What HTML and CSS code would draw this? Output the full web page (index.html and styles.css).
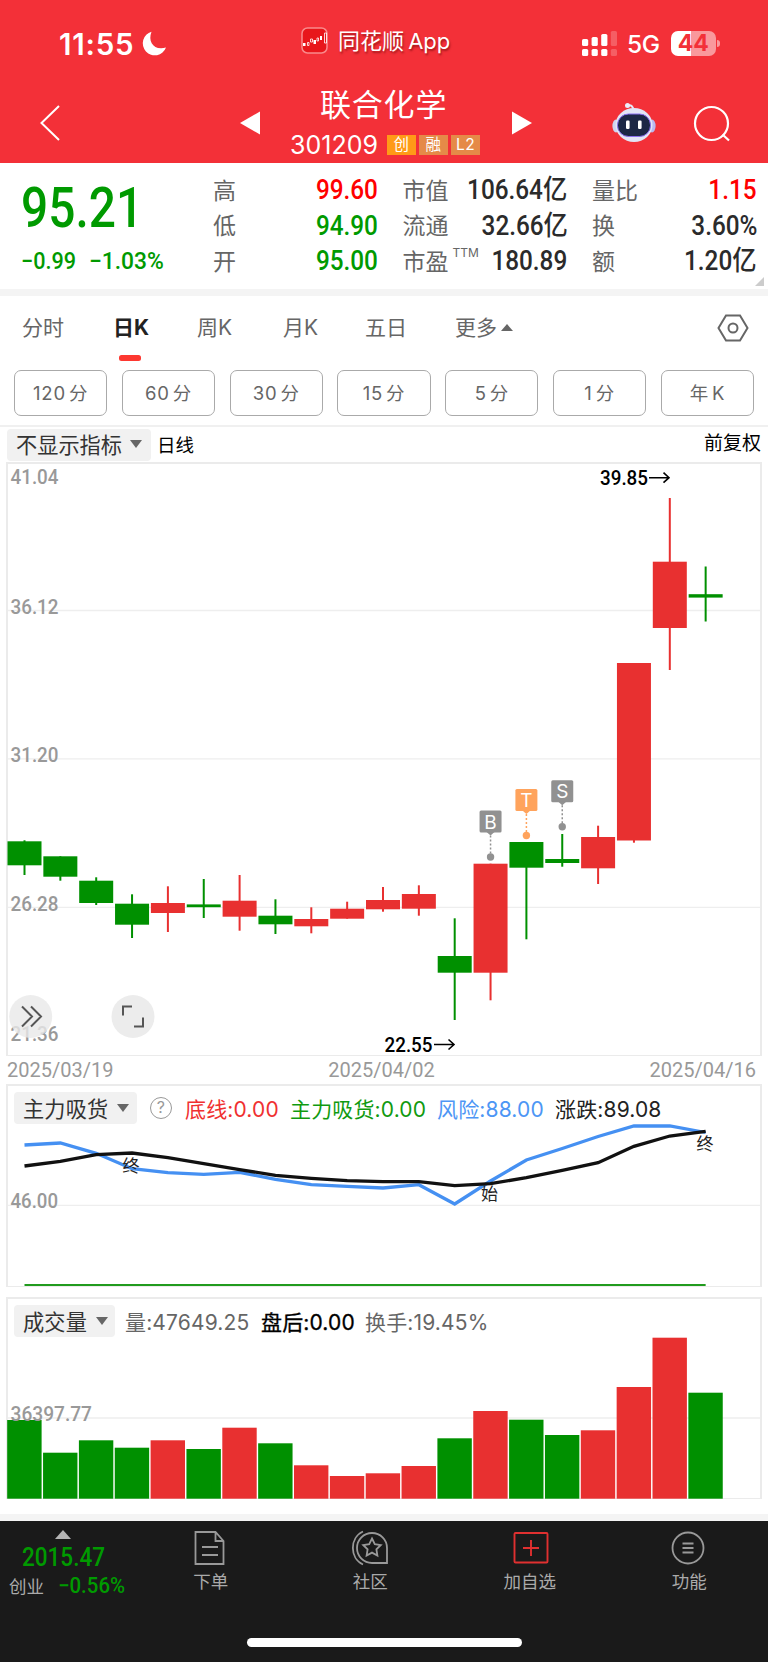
FILE: index.html
```html
<!DOCTYPE html>
<html lang="zh-CN">
<head>
  <meta charset="UTF-8" />
  <meta name="viewport" content="width=device-width, initial-scale=1.0" />
  <title>联合化学 301209</title>
  <link rel="stylesheet" href="styles.css">
</head>
<body>
  <header class="header">
    <div class="status">
      <div class="status-time">11:55
        <svg width="25" height="25" viewBox="0 0 25 25"><path d="M9.500 0.800A12 12 0 1 0 24 16.600C12 20 5.500 11 9.500 0.800Z" fill="#fff"/></svg>
      </div>
      <div class="status-app">
        <svg width="27" height="27" viewBox="0 0 27 27">
          <rect x="1" y="1" width="25" height="25" rx="5.500" fill="#e8161b" stroke="#f98a8c" stroke-width="1.500"/>
          <path d="M2 16h2.500v3H2zM12.500 13h2.500v4h-2.500zM19 9h2v4h-2z" fill="#fff"/>
          <path d="M6.500 15.500h1.500v3H6.500zM9.500 12h2v3h-2zM16 11h1.500v3H16zM23.500 6h2v10h-2z" fill="none" stroke="#fff" stroke-width=".8"/>
        </svg>
        <span>同花顺 App</span>
      </div>
      <div class="status-right">
        <svg width="36" height="26" viewBox="0 0 36 26" fill="#fff">
          <rect x="0" y="8" width="6.200" height="7" rx="1.600"/><rect x="0" y="18" width="6.200" height="7" rx="1.600"/>
          <rect x="9.600" y="6" width="6.200" height="9" rx="1.600"/><rect x="9.600" y="18" width="6.200" height="7" rx="1.600"/>
          <rect x="19.200" y="3" width="6.200" height="12" rx="1.600"/><rect x="19.200" y="18" width="6.200" height="7" rx="1.600"/>
          <g opacity=".22"><rect x="28.800" y="0" width="6.200" height="15" rx="1.600"/><rect x="28.800" y="18" width="6.200" height="7" rx="1.600"/></g>
        </svg>
        <span class="net">5G</span>
        <span class="battery">44</span>
      </div>
    </div>
    <div class="nav">
      <svg class="back" width="22" height="38" viewBox="0 0 22 38"><path d="M20 2 2.500 19 20 36" fill="none" stroke="#fff" stroke-width="2"/></svg>
      <svg class="prev" width="20" height="24" viewBox="0 0 20 24"><path d="M20 .5v23L0 12z" fill="#fff"/></svg>
      <div class="stock">
        <div class="stock-name">联合化学</div>
        <div class="stock-code"><span class="code">301209</span><span class="tag hot">创</span><span class="tag">融</span><span class="tag">L2</span></div>
      </div>
      <svg class="next" width="20" height="24" viewBox="0 0 20 24"><path d="M0 .5v23L20 12z" fill="#fff"/></svg>
      <svg class="robot" width="44" height="41" viewBox="0 0 44 41">
        <path d="M16 3.500q5-1 5.500 5" fill="none" stroke="#e6e8f5" stroke-width="2"/>
        <circle cx="15.500" cy="3.500" r="2.500" fill="#eceefa"/>
        <ellipse cx="4" cy="24" rx="3.600" ry="6.500" fill="#cfd3ee"/><ellipse cx="40" cy="24" rx="3.600" ry="6.500" fill="#b9b8f0"/>
        <ellipse cx="22" cy="23" rx="18.500" ry="17" fill="#e2e5f6"/>
        <rect x="5.500" y="12" width="33" height="22.500" rx="11" fill="#1c2745" stroke="#8a6ff0" stroke-width="1"/>
        <rect x="14" y="18.500" width="3.600" height="8.500" rx="1.200" fill="#fff"/><rect x="26" y="18.500" width="3.600" height="8.500" rx="1.200" fill="#fff"/>
      </svg>
      <svg class="search" width="38" height="38" viewBox="0 0 38 38" fill="none" stroke="#fff" stroke-width="2.200"><circle cx="18.500" cy="18.500" r="16.500"/><path d="M29.500 29.500l6.500 6"/></svg>
    </div>
  </header>

  <section class="quote">
    <div class="price">
      <div class="last"><span class="num">95.21</span></div>
      <div class="change"><span class="num">−0.99</span><span class="num">−1.03%</span></div>
    </div>
    <div class="stats">
      <div class="stat"><span>高</span><b class="num up">99.60</b></div>
      <div class="stat"><span>市值</span><b class="num">106.64亿</b></div>
      <div class="stat"><span>量比</span><b class="num up">1.15</b></div>
      <div class="stat"><span>低</span><b class="num down">94.90</b></div>
      <div class="stat"><span>流通</span><b class="num">32.66亿</b></div>
      <div class="stat"><span>换</span><b class="num">3.60%</b></div>
      <div class="stat"><span>开</span><b class="num down">95.00</b></div>
      <div class="stat"><span>市盈<sup>TTM</sup></span><b class="num">180.89</b></div>
      <div class="stat"><span>额</span><b class="num">1.20亿</b></div>
    </div>
    <i class="corner"></i>
  </section>

  <nav class="tabs">
    <span>分时</span>
    <span class="active">日K</span>
    <span>周K</span>
    <span>月K</span>
    <span>五日</span>
    <span>更多<i class="tri-up"></i></span>
    <svg width="32" height="28" viewBox="0 0 32 28" fill="none" stroke="#666" stroke-width="2"><path d="M9 1.500h14L30.500 14 23 26.500H9L1.500 14z"/><circle cx="16" cy="14" r="4.500"/></svg>
  </nav>

  <div class="periods">
    <button>120 分</button>
    <button>60 分</button>
    <button>30 分</button>
    <button>15 分</button>
    <button>5 分</button>
    <button>1 分</button>
    <button>年 K</button>
  </div>

  <div class="chart-bar">
    <span class="chip">不显示指标<i class="tri-down"></i></span>
    <span class="line-name">日线</span>
    <span class="adjust">前复权</span>
  </div>

  <div class="panel kline">
    <svg id="kline" width="752" height="591" viewBox="8 464 752 591"></svg>
  </div>
  <div class="dates"><span>2025/03/19</span><span>2025/04/02</span><span>2025/04/16</span></div>

  <div class="panel flow">
    <div class="panel-head">
      <span class="chip">主力吸货<i class="tri-down"></i></span>
      <span class="help">?</span>
      <span class="c-red">底线:0.00</span>
      <span class="c-green">主力吸货:0.00</span>
      <span class="c-blue">风险:88.00</span>
      <span class="c-black">涨跌:89.08</span>
    </div>
    <svg id="flow" width="752" height="162" viewBox="8 1124 752 162"></svg>
  </div>

  <div class="panel volume">
    <div class="panel-head">
      <span class="chip">成交量<i class="tri-down"></i></span>
      <span>量:47649.25</span>
      <span class="c-strong">盘后:0.00</span>
      <span>换手:19.45%</span>
    </div>
    <svg id="volume" width="752" height="161" viewBox="8 1337 752 161"></svg>
  </div>

  <footer class="footer">
    <div class="index">
      <i class="tri-index"></i>
      <div class="index-value"><span class="num">2015.47</span></div>
      <div class="index-row"><span>创业</span><span class="num">−0.56%</span></div>
    </div>
    <div class="item">
      <svg width="34" height="36" viewBox="0 0 34 36" fill="none" stroke="#999" stroke-width="1.800"><path d="M1.500 2h20l8 9v23h-28zM21.500 2v9h8M8 17h16M8 25h16"/></svg>
      <span>下单</span>
    </div>
    <div class="item">
      <svg width="38" height="36" viewBox="0 0 38 36" fill="none" stroke="#999" stroke-width="1.800"><path d="M36 33H21A15 15 0 1 1 36 18zM12 1.500C-1.500 7.500-1.500 28.500 12 34.500"/><path d="M21 8.500l2.800 5.600 6 .9-4.400 4.300 1 6.200-5.400-2.900-5.400 2.900 1-6.200-4.400-4.300 6-.9z"/></svg>
      <span>社区</span>
    </div>
    <div class="item">
      <svg width="36" height="36" viewBox="0 0 36 36" fill="none" stroke="#e03030" stroke-width="1.900"><rect x="2.500" y="3" width="33" height="29.500" rx="1"/><path d="M19 10v16M11 18h16"/></svg>
      <span>加自选</span>
    </div>
    <div class="item">
      <svg width="36" height="36" viewBox="0 0 36 36" fill="none" stroke="#999" stroke-width="1.800"><circle cx="17" cy="18" r="15.500"/><path d="M11.500 13.500h11M11.500 18h11M11.500 22.500h11"/></svg>
      <span>功能</span>
    </div>
    <div class="home"></div>
  </footer>

  <script>
    const STEP = 35.85, FIRST = 24.5, WIDTH = 34;
    const RED = '#e83030', GREEN = '#009000';
    const cx = i => FIRST + STEP * i;

    // [up, body top, body bottom, wick top, wick bottom, volume top]
    const days = [
      [0, 841.3, 865.3, 840.3, 875, 1420],
      [0, 856.3, 876.7, 856.3, 880.7, 1452.7],
      [0, 880.7, 903, 877.3, 905, 1440.3],
      [0, 903.7, 924.7, 894.3, 938, 1447.7],
      [1, 903, 913, 886.3, 932, 1440.3],
      [0, 904.4, 907.2, 879, 918, 1449],
      [1, 900.7, 916.7, 875, 930.7, 1427.7],
      [0, 915.7, 924.3, 899.3, 934, 1443.3],
      [1, 919, 926.3, 907.3, 933.3, 1465.3],
      [1, 908.7, 918.7, 901.7, 918.7, 1476],
      [1, 900, 909.3, 887, 911.7, 1473.3],
      [1, 894, 908.7, 885.3, 915.7, 1466],
      [0, 956, 972.7, 918.3, 1020, 1438.3],
      [1, 863.7, 972.7, 863.7, 1000.3, 1411],
      [0, 842, 867.7, 842, 939.3, 1419.7],
      [0, 859, 863, 834, 866.7, 1435],
      [1, 837, 868.3, 825.7, 884, 1430.3],
      [1, 663, 840.5, 663, 842.7, 1387],
      [1, 561.7, 628, 498, 670, 1337.7],
      [0, 594.2, 597.6, 566.5, 621.5, 1392.7]
    ];
    const risk = [1145, 1143, 1153.3, 1168.7, 1172.7, 1174.3, 1172.3, 1179.3, 1184.7, 1186.3, 1188, 1184.7, 1204, 1181, 1160, 1148.5, 1136.5, 1126, 1126, 1132.5];
    const trend = [1166, 1161.3, 1154.7, 1153, 1157.7, 1163.7, 1169.7, 1175.3, 1178.3, 1180.7, 1181.7, 1181.7, 1185.7, 1183.7, 1177.7, 1170.3, 1162.7, 1146.3, 1136, 1131.3];

    const rect = (x, y, w, h, fill) => `<rect x="${x}" y="${y}" width="${w}" height="${h}" fill="${fill}"/>`;
    const grid = y => `<path d="M8 ${y}H760" stroke="#eee" stroke-width="1.3"/>`;
    const label = (x, y, len, text, cls = 'axis') => `<text class="${cls}" x="${x}" y="${y}" textLength="${len}" lengthAdjust="spacingAndGlyphs">${text}</text>`;

    function drawKline() {
      let s = grid(610.5) + grid(758.9) + grid(907.3);
      days.forEach(([up, top, bottom, high, low], i) => {
        const c = up ? RED : GREEN;
        s += rect(cx(i) - 1, high, 2, low - high, c) + rect(cx(i) - WIDTH / 2, top, WIDTH, bottom - top, c);
      });
      [['B', 13, 810.5, '#919191'], ['T', 14, 789, '#ffa35c'], ['S', 15, 780.2, '#919191']].forEach(([t, i, y, c]) => {
        const x = cx(i);
        s += `<rect x="${x - 11}" y="${y}" width="22" height="22" rx="1.5" fill="${c}"/>
          <path d="M${x - 4} ${y + 21.5}h8l-4 3.500z" fill="${c}"/>
          <path d="M${x} ${y + 25}v18" stroke="${c}" stroke-width="1.5" stroke-dasharray="2 2"/>
          <circle cx="${x}" cy="${y + 46.5}" r="3.700" fill="${c}"/>
          <text class="mark" x="${x}" y="${y + 18}">${t}</text>`;
      });
      s += label(10.5, 483.5, 48, '41.04') + label(10.5, 613.8, 48, '36.12') + label(10.5, 762.2, 48, '31.20')
        + label(10.5, 910.7, 48, '26.28') + label(10.5, 1040.7, 48, '21.36');
      s += label(600, 485, 48, '39.85', 'extreme') + label(384.500, 1052, 48, '22.55', 'extreme');
      s += '<path d="M649 477.700h19M663.500 472.700l5.500 5-5.500 5M434 1044.500h19M448.500 1039.500l5.500 5-5.500 5" fill="none" stroke="#000" stroke-width="1.6"/>';
      s += `<circle cx="30.700" cy="1016.500" r="21.500" fill="#e8e8e8" opacity=".8"/><circle cx="133" cy="1016.500" r="21.500" fill="#ececec"/>
        <path d="M22 1006.500l10 10-10 10M31 1006.500l10 10-10 10M123 1015.500v-9h9M134 1026.500h9v-9" fill="none" stroke="#555" stroke-width="2"/>`;
      document.getElementById('kline').innerHTML = s;
    }

    function drawFlow() {
      const line = (pts, c, w) => `<polyline points="${pts.map((y, i) => cx(i) + ',' + y).join(' ')}" fill="none" stroke="${c}" stroke-width="${w}"/>`;
      let s = grid(1205.4) + label(10.5, 1208.3, 47.5, '46.00');
      s += line(risk, '#4590f2', 3.3) + line(trend, '#111', 3.3);
      s += `<path d="M${cx(0)} 1285H${cx(19)}" stroke="#219b1e" stroke-width="2"/>`;
      s += '<text class="note" x="131" y="1172">终</text><text class="note" x="489.500" y="1200">始</text><text class="note" x="705" y="1150">终</text>';
      document.getElementById('flow').innerHTML = s;
    }

    function drawVolume() {
      let s = grid(1418);
      days.forEach((d, i) => { s += rect(cx(i) - WIDTH / 2 - 0.3, d[5], WIDTH + 0.4, 1498.7 - d[5], d[0] ? RED : GREEN); });
      s += label(10.5, 1421, 81.5, '36397.77');
      document.getElementById('volume').innerHTML = s;
    }

    drawKline();
    drawFlow();
    drawVolume();
  </script>
</body>
</html>
```

FILE: styles.css
```css
* { box-sizing: border-box; }
body { margin: 0; width: 768px; height: 1662px; background: #fff; font-family: Inter, "Noto Sans CJK SC", sans-serif; color: #666; overflow: hidden; }
svg { display: block; overflow: visible; flex: none; }
i { font-style: normal; }

/* narrow figures used for every price */
.num { display: inline-block; font-family: Roboto, "Noto Sans CJK SC", sans-serif; font-weight: 500; transform: scaleX(.9); transform-origin: left center; white-space: nowrap; }

.header { height: 163px; background: #f33038; color: #fff; }
.status { height: 84px; padding-top: 26px; display: grid; grid-template-columns: 301px 280px 1fr; }
.status-time { display: flex; align-items: center; gap: 8px; height: 35px; padding-left: 59px; font-size: 29.5px; font-weight: 600; letter-spacing: .8px; }
.status-app { display: flex; align-items: center; gap: 10px; height: 28px; font-size: 22px; text-shadow: 1px 2px 2px rgba(90,0,0,.5); }
.status-app span { padding-bottom: 2px; word-spacing: -2px; white-space: nowrap; }
.status-right { display: flex; align-items: center; height: 35px; padding-left: 1px; }
.net { margin-left: 9px; font-size: 24.5px; font-weight: 500; letter-spacing: -.3px; }
.battery { position: relative; width: 45px; height: 25px; margin-left: 11px; border-radius: 7px; background: linear-gradient(90deg, #fff 20px, #f9989c 20px); color: #f33038; font-size: 23px; line-height: 25px; font-weight: 700; text-align: center; }
.battery::after { content: ""; position: absolute; left: 46.5px; top: 9px; width: 2.500px; height: 7px; border-radius: 0 3px 3px 0; background: #f9989c; }

.nav { display: flex; height: 79px; }
.back { margin: 20px 0 0 39px; }
.prev { margin: 27px 0 0 179px; }
.stock { width: 248px; padding-left: 30px; }
.stock-name { margin-left: 30px; padding-top: 1px; font-size: 31px; line-height: 40px; letter-spacing: .8px; white-space: nowrap; }
.stock-code { display: flex; align-items: center; height: 39px; }
.code { width: 97px; font-size: 25px; letter-spacing: 0; }
.tag { width: 29px; height: 20px; margin-right: 3px; background: #e58a48; font-size: 15.5px; line-height: 20px; text-align: center; letter-spacing: .5px; }
.tag.hot { background: #ff9a17; }
.next { margin: 27px 0 0 4px; }
.robot { margin: 18px 0 0 80px; }
.search { margin: 21px 0 0 37px; }

.quote { position: relative; display: flex; height: 133px; border-bottom: 7px solid #f4f4f4; }
.price { width: 213px; padding-left: 21px; color: #009a00; }
.last { height: 77px; padding-top: 12px; font-size: 55px; line-height: 64px; }
.last .num { transform: scaleX(.87); }
.change { display: flex; font-size: 24px; line-height: 42px; }
.change .num { width: 68px; }
.change .num:last-child { transform: scaleX(.95); }
.stats { width: 544px; padding-top: 10px; display: grid; grid-template-columns: repeat(3, 165px); grid-template-rows: repeat(3, 35.5px); column-gap: 24.5px; }
.stat { display: flex; justify-content: space-between; align-items: center; font-size: 23px; white-space: nowrap; line-height: 35px; }
.stat .num { font-size: 27px; color: #2b2b2b; transform-origin: right center; }
.stat .num.up { color: #f00; }
.stat .num.down { color: #009a00; }
.stat > span { width: 50px; padding-top: 1px; overflow: visible; }
.stat sup { margin-left: 4px; font-size: 12px; line-height: 0; vertical-align: 13px; letter-spacing: 0; }
.corner { position: absolute; right: 4px; bottom: 0; border-left: 9px solid transparent; border-bottom: 9px solid #ccc; margin-bottom: 3px; }

.tabs { display: grid; grid-template-columns: 91px 84px 86px 82px 90px 262px 32px; height: 74px; padding-left: 22px; font-size: 21px; line-height: 64px; white-space: nowrap; }
.tabs span { position: relative; }
.tabs svg { margin-top: 18px; }
.tabs .active { color: #222; font-weight: 700; }
.tabs .active::after { content: ""; position: absolute; left: 6px; top: 59px; width: 22px; height: 6px; border-radius: 2.500px; background: #fd3830; }
.tri-up { display: inline-block; margin-left: 4px; vertical-align: 4px; border: 6px solid transparent; border-bottom: 7.500px solid #666; border-top: 0; }
.tri-down { display: inline-block; border: 6px solid transparent; border-top: 8px solid #666; border-bottom: 0; }

.periods { display: flex; gap: 14.5px; height: 57px; padding-left: 14px; border-bottom: 2px solid #f0f0f0; }
.periods button { width: 93.300px; height: 46px; padding: 0 0 2px; border: 1px solid #aaa; border-radius: 7px; background: #fff; color: #666; font-family: inherit; font-size: 18.5px; letter-spacing: .8px; word-spacing: -3px; flex: none; }

.chart-bar { display: flex; align-items: center; height: 35px; padding: 0 7px; color: #000; }
.chip { display: flex; align-items: center; justify-content: space-between; height: 32px; padding: 0 9px 2px; border-radius: 4px; background: #f1f1f1; color: #333; font-size: 21.200px; }
.chart-bar .chip { width: 144px; }
.line-name { margin-left: 6px; padding-bottom: 2px; font-size: 18.5px; }
.adjust { margin-left: auto; padding-bottom: 6px; font-size: 19px; }

.panel { width: 756px; margin-left: 6px; border: 2px solid #ebebeb; border-bottom-width: 1px; }
.kline { height: 594px; }
.dates { display: flex; justify-content: space-between; height: 28px; width: 756px; margin-left: 7px; padding-right: 7px; font-family: Roboto, sans-serif; font-size: 20px; line-height: 28px; color: #999; }
.flow { height: 203px; }
.volume { height: 202px; margin-top: 10px; }
.panel-head { display: flex; align-items: center; height: 38px; padding: 6px 0 0 6px; font-size: 21px; letter-spacing: .15px; white-space: nowrap; }
.panel-head > span { flex: none; padding-bottom: 1px; }
.flow .chip { width: 123px; padding-right: 8px; }
.panel-head > .help { width: 22px; height: 22px; margin: 0 13px 0 13px; padding: 0; border: 1.500px solid #999; border-radius: 50%; color: #999; font-size: 16px; line-height: 19px; text-align: center; }
.c-red { width: 105px; color: #f03030; }
.c-green { width: 147px; color: #109a10; }
.c-blue { width: 118px; color: #4d96f5; }
.c-black { color: #222; }
.volume .chip { width: 101px; margin-right: 10px; padding-right: 7px; }
.volume .panel-head > span:nth-child(2) { width: 136px; }
.c-strong { width: 104px; color: #000; -webkit-text-stroke: .3px #000; }

.axis { font-family: Roboto, sans-serif; font-weight: 500; font-size: 20.5px; fill: #999; }
.extreme { font-family: Roboto, sans-serif; font-weight: 500; font-size: 20.5px; fill: #000; }
.mark { font-size: 19px; fill: #fff; text-anchor: middle; }
.note { font-size: 17px; fill: #222; text-anchor: middle; }

.footer { position: relative; display: grid; grid-template-columns: 131px repeat(4, 159.500px); height: 141px; margin-top: 22px; background: #1a1a1a; box-shadow: 0 -7px #f4f4f4; color: #aaa; }
.index { white-space: nowrap; }
.tri-index { display: block; width: 0; margin: 9px 0 0 55px; border: 8px solid transparent; border-bottom: 9px solid #b5b5b5; border-top: 0; }
.index-value { height: 32px; margin-top: 2px; padding-left: 22px; color: #009a00; font-size: 25px; line-height: 33px; }
.index-row { display: flex; align-items: center; height: 24px; padding-left: 9px; font-size: 17.5px; }
.index-row .num { margin-left: 14px; color: #009a00; font-size: 21.5px; transform: scaleX(.95); }
.item { display: flex; flex-direction: column; align-items: center; padding-top: 9px; font-size: 17.5px; }
.item span { line-height: 31px; }
.home { position: absolute; left: 247px; top: 117px; width: 275px; height: 9px; border-radius: 5px; background: #fff; }
```
